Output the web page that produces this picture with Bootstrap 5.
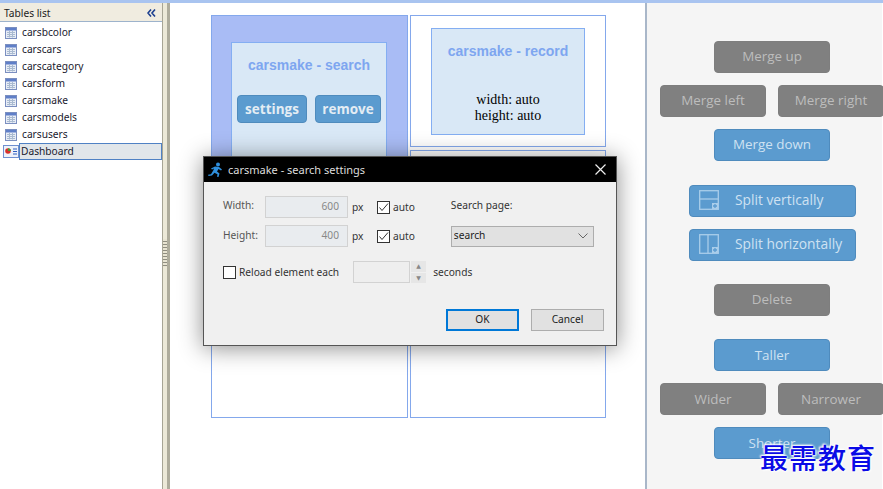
<!DOCTYPE html>
<html lang="en">
<head>
<meta charset="utf-8">
<title>Dashboard layout</title>
<link href="https://cdn.jsdelivr.net/npm/bootstrap@5.3.0/dist/css/bootstrap.min.css" rel="stylesheet">
<style>
html,body{height:100%;margin:0;overflow:hidden;background:#fff}
.shell{width:883px;height:489px;position:relative;overflow:hidden;border-top:3px solid #a9c4f0;}
.side{width:162px;font:10.2px "Noto Sans",sans-serif;color:#1a1a2e;background:#fff}
.side-head{height:19px;margin-bottom:2px;padding:2px 6px 0 4px;background:#f0ece0;border-bottom:1px solid #9db3cc;font-size:10.2px;color:#222}
.side-head svg{display:block}
.side-item{height:17px;padding-left:5px;gap:5px;line-height:17px;white-space:nowrap}
.side-item.picked{padding-left:3px;gap:0;}
.picked span{flex:1;background:#e1e6ea;border:1px solid #4f81c4;line-height:15px;padding-left:1px}
.splitter{width:8px;background:#ece9d8;border-left:1px solid #a7a595;border-right:3px solid #aeac9c;position:relative}
.grip{position:absolute;left:0;top:236px;width:4px;height:28px;background:repeating-linear-gradient(#e8e4d2 0 2px,#8f8d80 2px 3px)}
.stage{width:475px;background:#fff;padding:12px 0 0 41px}
.col-a{width:197px}.col-b{width:196px;margin-left:2px}
.cell{border:1px solid #84a8ec;background:#fff}
.cell-on{background:#a9bcf5;height:180px;padding:26px 20px 0 19px}
.cell-rest{height:221px;margin-top:2px}
.cell-top{height:132px;padding:12px 20px 0}
.cell-low{height:268px;margin-top:3px}
.inner{border:1px solid #84aef2;background:#d9e8f6;text-align:center}
.inner-a{height:160px;padding-top:14px}
.inner-b{height:107px;padding-top:14px}
.inner-title{font:bold 14px/17px "Liberation Sans",sans-serif;color:#7ea6f0}
.inner-b .dim{font:14px/16px "Liberation Serif",serif;color:#000;margin-top:32px}
.act{font:bold 13.5px/1 "Open Sans",sans-serif;color:#e4edf4;background:#5b9bcf;border:1px solid #4f8bbd;border-radius:4px;height:28px;padding:1px 0 0}
.gap-acts{margin-top:21px;padding:0 5px;gap:8px}
.a-set{width:71px}.a-rem{width:67px}
.tools{width:237px;background:#f5f5f5;border-left:2px solid #a9b7c9;padding-top:38px}
.tool{font:500 13.4px/1 "Open Sans",sans-serif;height:32px;border-radius:4px;padding:0;border:1px solid #7e7e7e;background:#808080;color:#bdbdbd;--bs-btn-hover-bg:#808080}
.tool.live{background:#5b9bcf;border-color:#4f8bbd;color:#cfe2f2}
.tool.low-text{padding-top:2px}
.w-mid{width:116px;margin-left:67px;display:block}
.w-half{width:106px;flex:none}
.duo{margin-left:13px;width:240px;gap:12px;margin-top:12px;margin-bottom:12px}
.split{width:167px;margin-left:42px;display:flex;align-items:center;padding:0 0 2px 9px;gap:16px;font-size:13.8px}
.split-next{margin-top:12px}
.delete-gap,.taller-gap{margin-top:23px}
.dlg{position:absolute;left:203px;top:153px;width:414px;height:190px;background:#f0f0f0;border:1px solid #555;box-shadow:0 2px 22px rgba(0,0,0,.45);font:10.2px "Noto Sans",sans-serif;color:#333}
.dlg-bar{height:25px;background:#000;color:#ddd;padding:0 10px 0 4px;gap:4px;font-size:11px}
.dlg-body{padding:14px 12px 0 19px}
.line{height:22px;margin-bottom:7px}
.lab{width:42px;color:#555;padding-bottom:4px}
.lab-low{padding-bottom:2px}
.num{width:83px;height:22px;border:1px solid #d2d2d2;background:#eee;border-radius:0;color:#888;font-size:10.2px;text-align:right;padding:0 8px 3px;line-height:18px;box-shadow:none}
.unit{margin-left:4px;width:25px;padding-bottom:1px}
.tick{width:13px;height:13px;margin:0 3px 0 0;border:1px solid #333;background:#fff;border-radius:0;flex:none}
.tick svg{display:block}
.pick-lab{margin-left:36px;padding-bottom:4px}
.pick{margin-left:36px;width:143px;height:21px;background-color:#e1e1e1;border:1px solid #adadad;color:#222;padding:0 0 0 2px;font-size:10.2px;border-radius:0;background-image:url("data:image/svg+xml,%3csvg xmlns='http://www.w3.org/2000/svg' viewBox='0 0 10 6'%3e%3cpath d='M.5.500 5 5 9.500.500' fill='none' stroke='%23666'/%3e%3c/svg%3e");background-position:right 5px center;background-size:10px 6px}
.spin{width:57px;height:22px;border:1px solid #d2d2d2;background:#eee;margin-left:14px}
.arrows{width:15px;height:22px;margin-left:1px;gap:1px}
.arrows i{flex:1;background:#e6e6e6;display:flex;align-items:center;justify-content:center;font:normal 6px/1 "DejaVu Sans",sans-serif;color:#888}
.secs{margin-left:7px}
.dlg-btn{width:73px;height:22px;background:#e1e1e1;border:1px solid #adadad;border-radius:0;font-size:10.2px;padding:0;color:#222}
.dlg-btn.main{border:2px solid #0078d7}
.dlg-foot{position:absolute;left:0;right:12px;top:152px;gap:12px}
.reload-row{margin-top:14px}
.stamp{position:absolute;left:760px;top:438px;font:500 28px/32px "Noto Sans CJK SC",sans-serif;letter-spacing:1px;color:#0a0ae6;text-shadow:0 0 2px #fff,0 0 3px #fff,1px 1px 2px #fff,-1px -1px 2px #fff;white-space:nowrap}
</style>
</head>
<body>
<svg width="0" height="0" class="position-absolute">
<symbol id="tb" viewBox="0 0 12 12"><rect x=".5" y=".5" width="11" height="11" fill="#e8edf6" stroke="#7b8fc0"/><rect x="1" y="1" width="10" height="2.500" fill="#5f7fc8"/><path d="M2 5.500h8M2 7.500h8M2 9.500h8M4.500 4v6.500M7.500 4v6.500" stroke="#a9bad0" stroke-width="1" fill="none"/></symbol>
</svg>
<div class="shell d-flex">
  <aside class="side flex-shrink-0">
    <div class="side-head d-flex align-items-center justify-content-between">
      <span>Tables list</span>
      <svg width="9" height="8" viewBox="0 0 9 8"><path d="M4 .5 1 4l3 3.500M8 .5 5 4l3 3.500" fill="none" stroke="#1c3f8f" stroke-width="1.600"/></svg>
    </div>
    <div class="d-flex flex-column">
      <div class="side-item d-flex align-items-center"><svg width="12" height="12"><use href="#tb"/></svg><span>carsbcolor</span></div>
      <div class="side-item d-flex align-items-center"><svg width="12" height="12"><use href="#tb"/></svg><span>carscars</span></div>
      <div class="side-item d-flex align-items-center"><svg width="12" height="12"><use href="#tb"/></svg><span>carscategory</span></div>
      <div class="side-item d-flex align-items-center"><svg width="12" height="12"><use href="#tb"/></svg><span>carsform</span></div>
      <div class="side-item d-flex align-items-center"><svg width="12" height="12"><use href="#tb"/></svg><span>carsmake</span></div>
      <div class="side-item d-flex align-items-center"><svg width="12" height="12"><use href="#tb"/></svg><span>carsmodels</span></div>
      <div class="side-item d-flex align-items-center"><svg width="12" height="12"><use href="#tb"/></svg><span>carsusers</span></div>
      <div class="side-item picked d-flex align-items-center"><svg width="16" height="13" viewBox="0 0 16 13" class="flex-shrink-0"><rect x=".5" y=".5" width="15" height="12" fill="#eef2fa" stroke="#6f8fd0"/><circle cx="5" cy="6" r="2.800" fill="#d8302a"/><path d="M5 6V3.200A2.800 2.800 0 0 1 7.800 6Z" fill="#3aa03a"/><path d="M10 4h4M10 6.500h4M10 9h4" stroke="#2f5fc0"/></svg><span>Dashboard</span></div>
    </div>
  </aside>
  <div class="splitter flex-shrink-0"><div class="grip"></div></div>
  <main class="stage d-flex flex-shrink-0 align-items-start">
    <div class="col-a">
      <div class="cell cell-on"><div class="inner inner-a">
        <div class="inner-title">carsmake - search</div>
        <div class="d-flex gap-acts justify-content-center">
          <button class="btn act a-set">settings</button><button class="btn act a-rem">remove</button>
        </div>
      </div></div>
      <div class="cell cell-rest"></div>
    </div>
    <div class="col-b">
      <div class="cell cell-top"><div class="inner inner-b">
        <div class="inner-title">carsmake - record</div>
        <div class="dim">width: auto<br>height: auto</div>
      </div></div>
      <div class="cell cell-low"></div>
    </div>
  </main>
  <aside class="tools flex-shrink-0">
    <button class="btn tool w-mid">Merge up</button>
    <div class="d-flex duo"><button class="btn tool w-half">Merge left</button><button class="btn tool w-half">Merge right</button></div>
    <button class="btn tool live w-mid">Merge down</button>
    <button class="btn tool live split mt-4"><svg width="20" height="20" viewBox="0 0 20 20" fill="none" stroke="#a9cdea" stroke-width="1.300"><rect x=".7" y=".7" width="18.600" height="18.600"/><path d="M.7 9h18.600"/><rect x="13" y="13" width="6" height="6" fill="#a9cdea" stroke="none"/><path d="M16 14v4M14 16h4" stroke="#5b9bcf"/></svg><span>Split vertically</span></button>
    <button class="btn tool live split split-next"><svg width="20" height="20" viewBox="0 0 20 20" fill="none" stroke="#a9cdea" stroke-width="1.300"><rect x=".7" y=".7" width="18.600" height="18.600"/><path d="M9 .7v18.600"/><rect x="13" y="13" width="6" height="6" fill="#a9cdea" stroke="none"/><path d="M16 14v4M14 16h4" stroke="#5b9bcf"/></svg><span>Split horizontally</span></button>
    <button class="btn tool w-mid delete-gap">Delete</button>
    <button class="btn tool live w-mid taller-gap low-text">Taller</button>
    <div class="d-flex duo"><button class="btn tool w-half low-text">Wider</button><button class="btn tool w-half low-text">Narrower</button></div>
    <button class="btn tool live w-mid low-text">Shorter</button>
  </aside>

  <div class="dlg" role="dialog">
    <div class="dlg-bar d-flex align-items-center">
      <svg width="16" height="16" viewBox="0 0 16 16" fill="#2f8fdc"><circle cx="10" cy="2.500" r="2"/><path d="M7 4.500 11 5l3 2.500-1 1-2.500-1.500-1.500 2.500 2.500 2-1 3.500-1.500-.3.500-2.500-3-1.500L4 13.500l-3.500.5L0 12.700l3-.5L5.500 8l.5-1.500-2 1-1-1Z"/></svg>
      <span class="flex-grow-1">carsmake - search settings</span>
      <svg width="11" height="11" viewBox="0 0 11 11"><path d="M.5.500l10 10M10.500.500l-10 10" stroke="#eee" stroke-width="1.200"/></svg>
    </div>
    <div class="dlg-body">
      <div class="line d-flex align-items-center">
        <span class="lab">Width:</span><input class="form-control num" value="600" disabled>
        <span class="unit">px</span>
        <span class="tick"><svg width="11" height="11" viewBox="0 0 11 11"><path d="M1.500 5.500 4 8.500 10 1.500" fill="none" stroke="#333"/></svg></span><span>auto</span>
        <span class="pick-lab">Search page:</span>
      </div>
      <div class="line d-flex align-items-center">
        <span class="lab lab-low">Height:</span><input class="form-control num" value="400" disabled>
        <span class="unit">px</span>
        <span class="tick"><svg width="11" height="11" viewBox="0 0 11 11"><path d="M1.500 5.500 4 8.500 10 1.500" fill="none" stroke="#333"/></svg></span><span>auto</span>
        <select class="form-select pick"><option>search</option></select>
      </div>
      <div class="line reload-row d-flex align-items-center">
        <span class="tick"></span><span>Reload element each</span>
        <span class="spin"></span>
        <span class="arrows d-flex flex-column"><i>▲</i><i>▼</i></span>
        <span class="secs">seconds</span>
      </div>
    </div>
    <div class="dlg-foot d-flex justify-content-end">
      <button class="btn dlg-btn main">OK</button><button class="btn dlg-btn">Cancel</button>
    </div>
  </div>
  <div class="stamp">最需教育</div>
</div>
</body>
</html>
